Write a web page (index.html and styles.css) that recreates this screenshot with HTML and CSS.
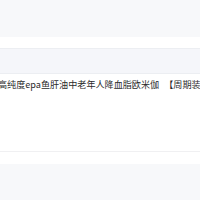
FILE: index.html
```html
<!DOCTYPE html>
<html lang="zh-CN">
<head>
  <meta charset="UTF-8">
  <title>商品列表</title>
  <meta name="viewport" content="width=device-width, initial-scale=1.0">
  <link rel="stylesheet" href="styles.css">
</head>
<body>

<div class="page">
  <!-- top area -->
  <div class="top"></div>
  <div class="spacer"></div>

  <!-- filter band -->
  <div class="band"></div>

  <!-- product row -->
  <div class="item">
    <div class="title">高纯度epa鱼肝油中老年人降血脂欧米伽 【周期装】深海鱼油软胶囊</div>
  </div>
  <div class="spacer-bottom"></div>

  <div class="footer"></div>
</div>

</body>
</html>
```

FILE: styles.css
```css
body {
  margin: 0;
  font-family: "Noto Sans CJK SC", "Noto Sans", sans-serif;
  background-color: #f7f8fa;
}

.page {
  width: 200px;
  height: 200px;
  overflow: hidden;
}

.top {
  height: 37px;
  background-color: #f7f8fa;
}

.spacer {
  height: 11px;
  background-color: #ffffff;
}

.band {
  height: 24px;
  background-color: #f5f6fa;
  border-top: 1px solid #eceef2;
  border-bottom: 1px solid #eceef2;
}

.item {
  height: 72px;
  padding-top: 5px;
  background-color: #ffffff;
  border-bottom: 1px solid #f0f0f2;
  overflow: hidden;
}

.title {
  font-size: 9.1px;
  line-height: 11px;
  color: #2b2b2b;
  white-space: nowrap;
  word-spacing: 3px;
  margin-left: -2px;
}

.spacer-bottom {
  height: 12px;
  background-color: #ffffff;
}

.footer {
  height: 35px;
  background-color: #f7f8fa;
}
```
